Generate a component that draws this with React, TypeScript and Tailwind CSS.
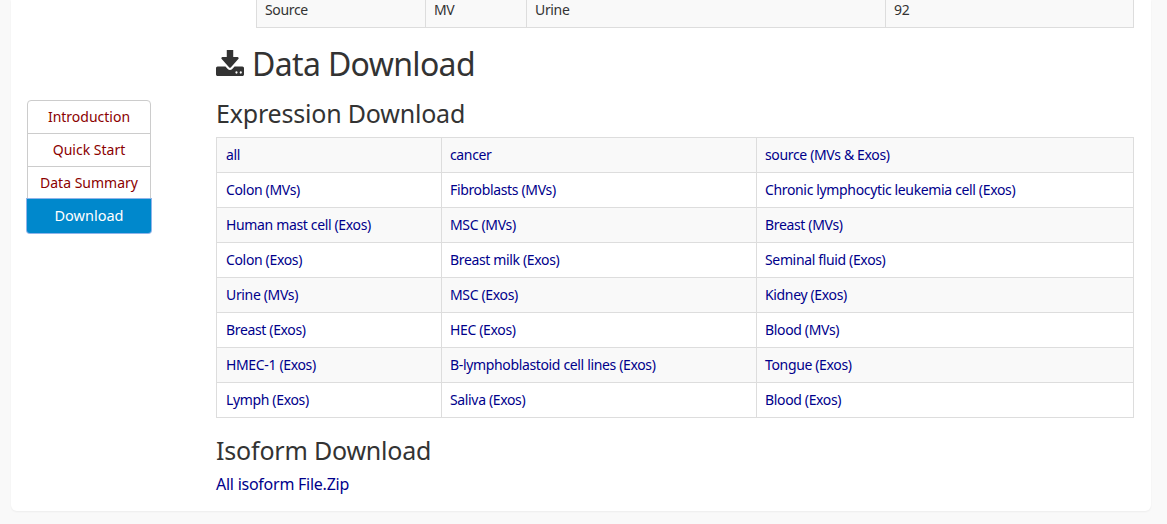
const navItems = ['Introduction', 'Quick Start', 'Data Summary'];

const rows = [
  ['all', 'cancer', 'source (MVs & Exos)'],
  ['Colon (MVs)', 'Fibroblasts (MVs)', 'Chronic lymphocytic leukemia cell (Exos)'],
  ['Human mast cell (Exos)', 'MSC (MVs)', 'Breast (MVs)'],
  ['Colon (Exos)', 'Breast milk (Exos)', 'Seminal fluid (Exos)'],
  ['Urine (MVs)', 'MSC (Exos)', 'Kidney (Exos)'],
  ['Breast (Exos)', 'HEC (Exos)', 'Blood (MVs)'],
  ['HMEC-1 (Exos)', 'B-lymphoblastoid cell lines (Exos)', 'Tongue (Exos)'],
  ['Lymph (Exos)', 'Saliva (Exos)', 'Blood (Exos)'],
];

function DownloadIcon() {
  return (
    <svg viewBox="64 128 1664 1408" preserveAspectRatio="none" className="mt-[7px] h-[26px] w-[28px] shrink-0" fill="currentColor">
      <path d="M1344 1344q0-26-19-45t-45-19-45 19-19 45 19 45 45 19 45-19 19-45zm256 0q0-26-19-45t-45-19-45 19-19 45 19 45 45 19 45-19 19-45zm128-224v320q0 40-28 68t-68 28h-1472q-40 0-68-28t-28-68v-320q0-40 28-68t68-28h465l135 136q58 56 136 56t136-56l136-136h464q40 0 68 28t28 68zm-325-569q17 41-14 70l-448 448q-18 19-45 19t-45-19l-448-448q-31-29-14-70 17-39 59-39h256v-448q0-26 19-45t45-19h256q26 0 45 19t19 45v448h256q42 0 59 39z" />
    </svg>
  );
}

export default function App() {
  return (
    <div className="h-[524px] overflow-hidden bg-[#f9f9f9] pl-[11px] pr-[16px] font-['Noto_Sans',sans-serif] text-[14px] text-[#333]">
      <div className="flex h-[511px] rounded-b-[6px] bg-white shadow-[0_1px_2px_rgba(0,0,0,0.05)]">
        <aside className="w-[205px] shrink-0 pl-[16px] pt-[100px]">
          <div className="w-[124px] text-center">
            {navItems.map((item, i) => (
              <a
                key={item}
                href="#"
                className={`block h-[34px] border border-[#ccc] bg-white leading-[32px] text-[#8b0000] ${i === 0 ? 'rounded-t-[4px]' : '-mt-px'}`}
              >
                {item}
              </a>
            ))}
            <a
              href="#"
              className="relative -mt-px block h-[34px] rounded-b-[3px] bg-[#0088cc] text-[14.5px] leading-[33px] text-white shadow-[0_0_0_1px_#8fb4ea]"
            >
              Download
            </a>
          </div>
        </aside>

        <main className="w-[918px] shrink-0">
          <table className="ml-[40px] -mt-[8px] w-[878px] table-fixed border-collapse tracking-[-0.35px]">
            <tbody>
              <tr className="h-[35px] bg-[#f9f9f9]">
                <td className="w-[169px] border border-t-0 border-[#ddd] px-[8px]">Source</td>
                <td className="w-[101px] border border-t-0 border-[#ddd] px-[8px]">MV</td>
                <td className="w-[359px] border border-t-0 border-[#ddd] px-[8px]">Urine</td>
                <td className="border border-t-0 border-[#ddd] px-[8px]">92</td>
              </tr>
            </tbody>
          </table>

          <h1 className="mt-[15px] flex h-[44px] items-start gap-[8px] text-[32px] leading-[42px] tracking-[-0.65px]">
            <DownloadIcon />
            Data Download
          </h1>
          <h3 className="mt-[11px] h-[30px] text-[25px] leading-[30px] tracking-[-0.2px]">Expression Download</h3>

          <table className="mt-[9px] w-[918px] table-fixed border-collapse tracking-[-0.35px]">
            <tbody>
              {rows.map((row, i) => (
                <tr key={row[0]} className={`h-[35px] ${i % 2 === 0 ? 'bg-[#f9f9f9]' : 'bg-white'}`}>
                  {row.map((cell, j) => (
                    <td
                      key={cell}
                      className={`border border-[#ddd] text-[#00008b] ${j === 0 ? 'w-[225px] px-[9px]' : j === 1 ? 'w-[315px] px-[8px]' : 'px-[8px]'}`}
                    >
                      <a href="#">{cell}</a>
                    </td>
                  ))}
                </tr>
              ))}
            </tbody>
          </table>

          <h3 className="mt-[17px] h-[30px] text-[25px] leading-[30px] tracking-[-0.2px]">Isoform Download</h3>
          <a href="#" className="mt-[7px] block text-[16px] leading-[24px] tracking-[-0.25px] text-[#00008b]">
            All isoform File.Zip
          </a>
        </main>
      </div>
    </div>
  );
}
